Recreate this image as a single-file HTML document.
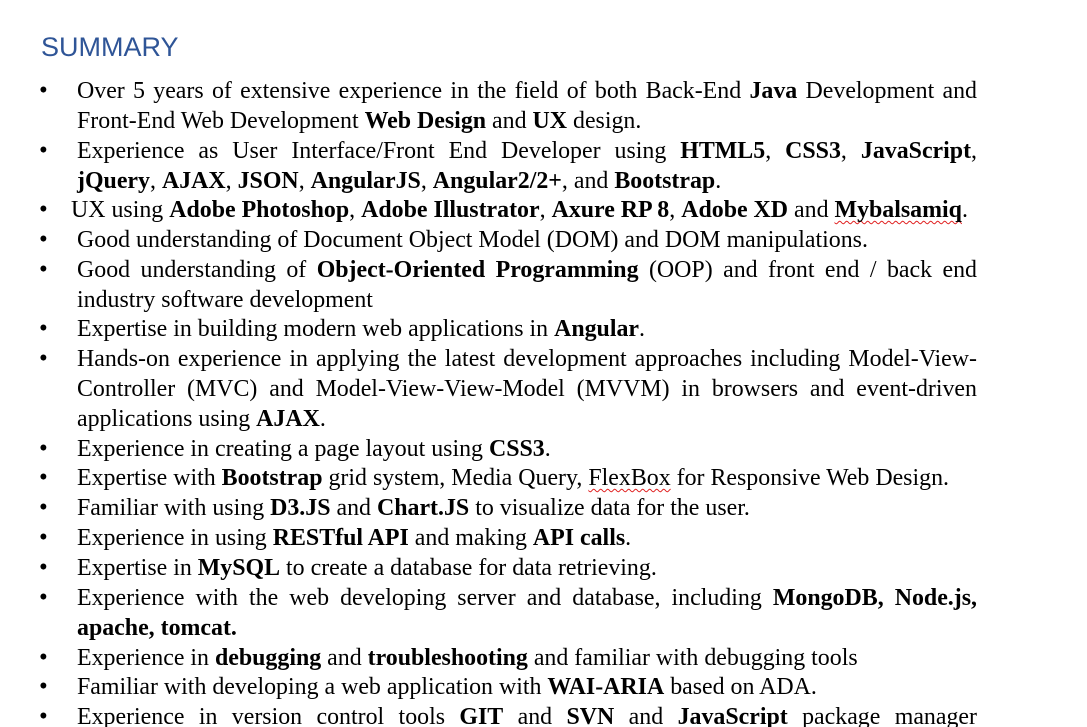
<!DOCTYPE html>
<html><head><meta charset="utf-8">
<style>
html,body{margin:0;padding:0;background:#fff;width:1087px;height:727px;overflow:hidden;position:relative}
h1{position:absolute;left:41px;top:29px;margin:0;font-family:"Liberation Sans",sans-serif;font-weight:400;font-size:27px;line-height:36px;color:#2F5597}
.l{position:absolute;left:77px;width:900px;font-family:"Liberation Serif","Times New Roman",serif;font-size:23.9px;line-height:30px;color:#000;white-space:nowrap}
.j{text-align:justify;text-align-last:justify;white-space:normal;height:30px;overflow:hidden}
.b{position:absolute;left:39px;font-family:"Liberation Serif",serif;font-size:25px;line-height:30px}
.w{text-decoration:underline wavy #e02020;text-decoration-skip-ink:none;text-underline-offset:3px;text-decoration-thickness:1px}
</style></head><body>
<h1>SUMMARY</h1>
<div class="b" style="top:76px">•</div>
<div class="l j" style="top:76px">Over 5 years of extensive experience in the field of both Back-End <b>Java</b> Development and</div>
<div class="l" style="top:106px">Front-End Web Development <b>Web Design</b> and <b>UX</b> design.</div>
<div class="b" style="top:136px">•</div>
<div class="l j" style="top:136px">Experience as User Interface/Front End Developer using <b>HTML5</b>, <b>CSS3</b>, <b>JavaScript</b>,</div>
<div class="l" style="top:166px"><b>jQuery</b>, <b>AJAX</b>, <b>JSON</b>, <b>AngularJS</b>, <b>Angular2/2+</b>, and <b>Bootstrap</b>.</div>
<div class="b" style="top:195px">•</div>
<div class="l" style="top:195px;left:71px">UX using <b>Adobe Photoshop</b>, <b>Adobe Illustrator</b>, <b>Axure RP 8</b>, <b>Adobe XD</b> and <b class="w">Mybalsamiq</b>.</div>
<div class="b" style="top:225px">•</div>
<div class="l" style="top:225px">Good understanding of Document Object Model (DOM) and DOM manipulations.</div>
<div class="b" style="top:255px">•</div>
<div class="l j" style="top:255px">Good understanding of <b>Object-Oriented Programming</b> (OOP) and front end / back end</div>
<div class="l" style="top:285px">industry software development</div>
<div class="b" style="top:314px">•</div>
<div class="l" style="top:314px">Expertise in building modern web applications in <b>Angular</b>.</div>
<div class="b" style="top:344px">•</div>
<div class="l j" style="top:344px">Hands-on experience in applying the latest development approaches including Model-View-</div>
<div class="l j" style="top:374px">Controller (MVC) and Model-View-View-Model (MVVM) in browsers and event-driven</div>
<div class="l" style="top:404px">applications using <b>AJAX</b>.</div>
<div class="b" style="top:434px">•</div>
<div class="l" style="top:434px">Experience in creating a page layout using <b>CSS3</b>.</div>
<div class="b" style="top:463px">•</div>
<div class="l" style="top:463px">Expertise with <b>Bootstrap</b> grid system, Media Query, <span class="w">FlexBox</span> for Responsive Web Design.</div>
<div class="b" style="top:493px">•</div>
<div class="l" style="top:493px">Familiar with using <b>D3.JS</b> and <b>Chart.JS</b> to visualize data for the user.</div>
<div class="b" style="top:523px">•</div>
<div class="l" style="top:523px">Experience in using <b>RESTful API</b> and making <b>API calls</b>.</div>
<div class="b" style="top:553px">•</div>
<div class="l" style="top:553px">Expertise in <b>MySQL</b> to create a database for data retrieving.</div>
<div class="b" style="top:583px">•</div>
<div class="l j" style="top:583px">Experience with the web developing server and database, including <b>MongoDB, Node.js,</b></div>
<div class="l" style="top:613px"><b>apache, tomcat.</b></div>
<div class="b" style="top:643px">•</div>
<div class="l" style="top:643px">Experience in <b>debugging</b> and <b>troubleshooting</b> and familiar with debugging tools</div>
<div class="b" style="top:672px">•</div>
<div class="l" style="top:672px">Familiar with developing a web application with <b>WAI-ARIA</b> based on ADA.</div>
<div class="b" style="top:702px">•</div>
<div class="l j" style="top:702px">Experience in version control tools <b>GIT</b> and <b>SVN</b> and <b>JavaScript</b> package manager</div>
</body></html>
